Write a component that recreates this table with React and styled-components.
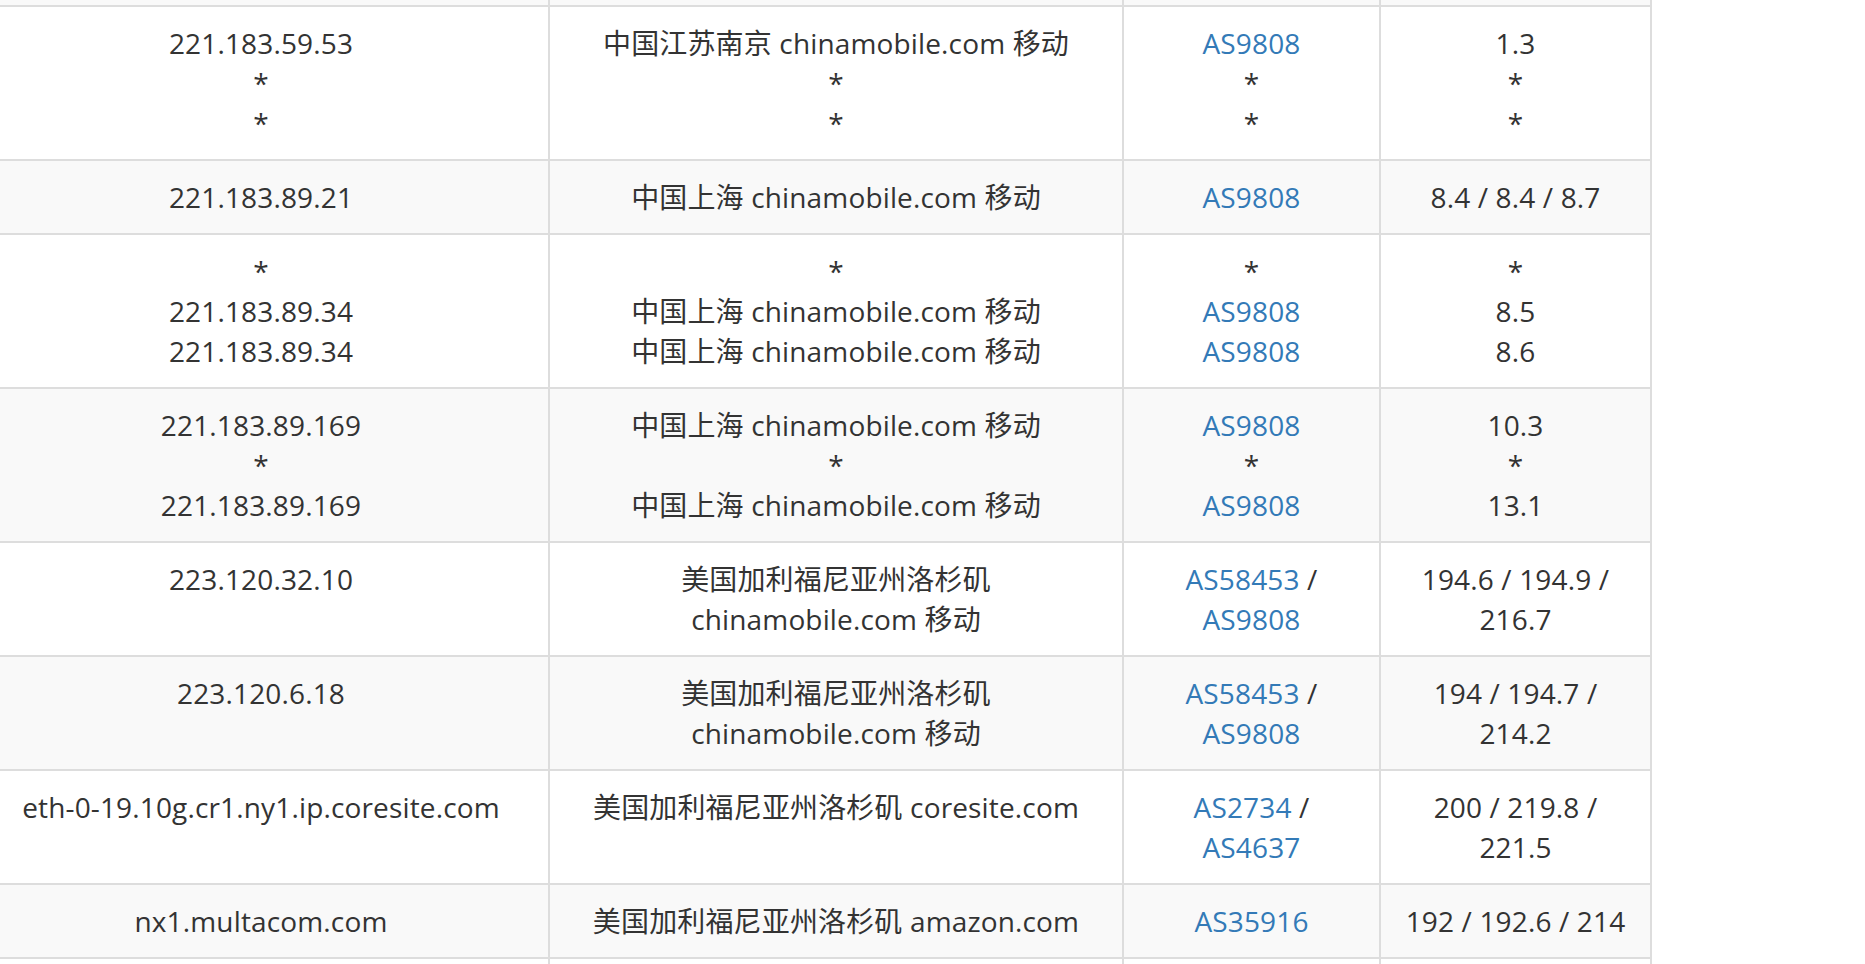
import React from 'react';
import styled, { createGlobalStyle } from 'styled-components';

const GlobalStyle = createGlobalStyle`
  html, body {
    margin: 0;
    padding: 0;
    background: #fff;
    overflow: hidden;
  }
  body {
    font-family: "Open Sans", "Noto Sans CJK SC", sans-serif;
    font-size: 28px;
    line-height: 40px;
    color: #333;
  }
`;

const Wrapper = styled.div`
  width: 1865px;
  height: 964px;
  overflow: hidden;
`;

const Table = styled.table`
  table-layout: fixed;
  border-collapse: collapse;
  border-spacing: 0;
  width: 1678px;
  margin-left: -28px;
  margin-top: -69px;
`;

const Row = styled.tr`
  background: ${p => (p.striped ? '#f9f9f9' : '#fff')};
`;

const Cell = styled.td`
  border: 2px solid #ddd;
  padding: 16px 20px;
  vertical-align: top;
  text-align: center;
  line-height: 40px;
  letter-spacing: 0.15px;
  white-space: normal;
`;

const Line = styled.div`
  min-height: 40px;
`;

const AsLink = styled.a`
  color: #337ab7;
  text-decoration: none;
`;

// first and last rows only peek in at the edges of the window
const edge = { ip: [''], loc: [''], asn: [''], rtt: [''] };

const rows = [
  edge,
  {
    ip: ['221.183.59.53', '*', '*'],
    loc: ['中国江苏南京 chinamobile.com 移动', '*', '*'],
    asn: [['AS9808'], '*', '*'],
    rtt: ['1.3', '*', '*'],
  },
  {
    ip: ['221.183.89.21'],
    loc: ['中国上海 chinamobile.com 移动'],
    asn: [['AS9808']],
    rtt: ['8.4 / 8.4 / 8.7'],
  },
  {
    ip: ['*', '221.183.89.34', '221.183.89.34'],
    loc: ['*', '中国上海 chinamobile.com 移动', '中国上海 chinamobile.com 移动'],
    asn: ['*', ['AS9808'], ['AS9808']],
    rtt: ['*', '8.5', '8.6'],
  },
  {
    ip: ['221.183.89.169', '*', '221.183.89.169'],
    loc: ['中国上海 chinamobile.com 移动', '*', '中国上海 chinamobile.com 移动'],
    asn: [['AS9808'], '*', ['AS9808']],
    rtt: ['10.3', '*', '13.1'],
  },
  {
    ip: ['223.120.32.10'],
    loc: ['美国加利福尼亚州洛杉矶 chinamobile.com 移动'],
    asn: [['AS58453', 'AS9808']],
    rtt: ['194.6 / 194.9 / 216.7'],
  },
  {
    ip: ['223.120.6.18'],
    loc: ['美国加利福尼亚州洛杉矶 chinamobile.com 移动'],
    asn: [['AS58453', 'AS9808']],
    rtt: ['194 / 194.7 / 214.2'],
  },
  {
    ip: ['eth-0-19.10g.cr1.ny1.ip.coresite.com'],
    loc: ['美国加利福尼亚州洛杉矶 coresite.com'],
    asn: [['AS2734', 'AS4637']],
    rtt: ['200 / 219.8 / 221.5'],
  },
  {
    ip: ['nx1.multacom.com'],
    loc: ['美国加利福尼亚州洛杉矶 amazon.com'],
    asn: [['AS35916']],
    rtt: ['192 / 192.6 / 214'],
  },
  edge,
];

const AsnLine = ({ value }) => {
  if (typeof value === 'string') return <Line>{value}</Line>;
  return (
    <Line>
      {value.map((as, i) => (
        <React.Fragment key={as}>
          {i > 0 && ' / '}
          <AsLink href="#">{as}</AsLink>
        </React.Fragment>
      ))}
    </Line>
  );
};

const App = () => (
  <Wrapper>
    <GlobalStyle />
    <Table>
      <colgroup>
        <col style={{ width: 576 }} />
        <col style={{ width: 574 }} />
        <col style={{ width: 257 }} />
        <col style={{ width: 271 }} />
      </colgroup>
      <tbody>
        {rows.map((row, r) => (
          <Row key={r} striped={r % 2 === 0}>
            <Cell>{row.ip.map((t, i) => <Line key={i}>{t}</Line>)}</Cell>
            <Cell>{row.loc.map((t, i) => <Line key={i}>{t}</Line>)}</Cell>
            <Cell>{row.asn.map((v, i) => <AsnLine key={i} value={v} />)}</Cell>
            <Cell>{row.rtt.map((t, i) => <Line key={i}>{t}</Line>)}</Cell>
          </Row>
        ))}
      </tbody>
    </Table>
  </Wrapper>
);

export default App;
